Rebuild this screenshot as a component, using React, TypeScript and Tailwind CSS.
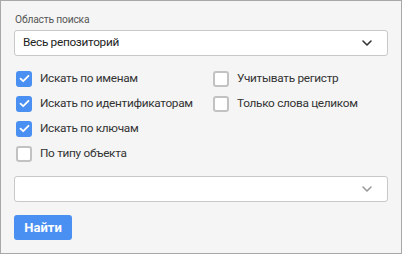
import * as React from 'react';

function Chevron({ color }: { color: string }) {
  return (
    <svg width="12" height="8" viewBox="0 0 12 8" fill="none">
      <path d="M2 2l4 4 4-4" stroke={color} strokeWidth="1.6" strokeLinecap="round" strokeLinejoin="round" />
    </svg>
  );
}

function Check({ label, checked }: { label: string; checked?: boolean }) {
  return (
    <label className="flex items-center h-[25px] gap-[8px] text-[11.8px] tracking-[-0.3px] text-[#333]">
      {checked ? (
        <span className="w-[16px] h-[16px] rounded-[3px] bg-[#4a8ff2] flex items-center justify-center">
          <svg width="11" height="9" viewBox="0 0 11 9" fill="none">
            <path d="M1.5 4.6l2.7 2.6L9.5 1.8" stroke="white" strokeWidth="1.8" strokeLinecap="round" strokeLinejoin="round" />
          </svg>
        </span>
      ) : (
        <span className="w-[16px] h-[16px] rounded-[3px] bg-white border-2 border-[#c2c2c2]" />
      )}
      <span>{label}</span>
    </label>
  );
}

export default function App() {
  return (
    <div className="w-[402px] h-[254px] bg-[#f5f5f5] border border-[#a8a8a8] px-[13px] pt-[12px] font-['Roboto',sans-serif]">
      <div className="text-[10.3px] tracking-[-0.2px] text-[#555] leading-[13px] ml-[1px]">Область поиска</div>
      <div className="mt-[4px] h-[26px] bg-white border border-[#c8c8c8] rounded-[3px] flex items-center justify-between pl-[8px] pr-[14px] text-[11.8px] tracking-[-0.3px] text-[#222]">
        <span>Весь репозиторий</span>
        <Chevron color="#333" />
      </div>
      <div className="mt-[10px] pl-[2px] grid grid-cols-[197px_1fr]">
        <div className="flex flex-col">
          <Check label="Искать по именам" checked />
          <Check label="Искать по идентификаторам" checked />
          <Check label="Искать по ключам" checked />
          <Check label="По типу объекта" />
        </div>
        <div className="flex flex-col">
          <Check label="Учитывать регистр" />
          <Check label="Только слова целиком" />
        </div>
      </div>
      <div className="mt-[10px] h-[26px] bg-white border border-[#c8c8c8] rounded-[3px] flex items-center justify-end pr-[14px]">
        <Chevron color="#999" />
      </div>
      <button className="mt-[13px] w-[58px] h-[25px] bg-[#4a8ff2] rounded-[3px] text-white font-bold text-[13px] flex items-center justify-center">
        Найти
      </button>
    </div>
  );
}
